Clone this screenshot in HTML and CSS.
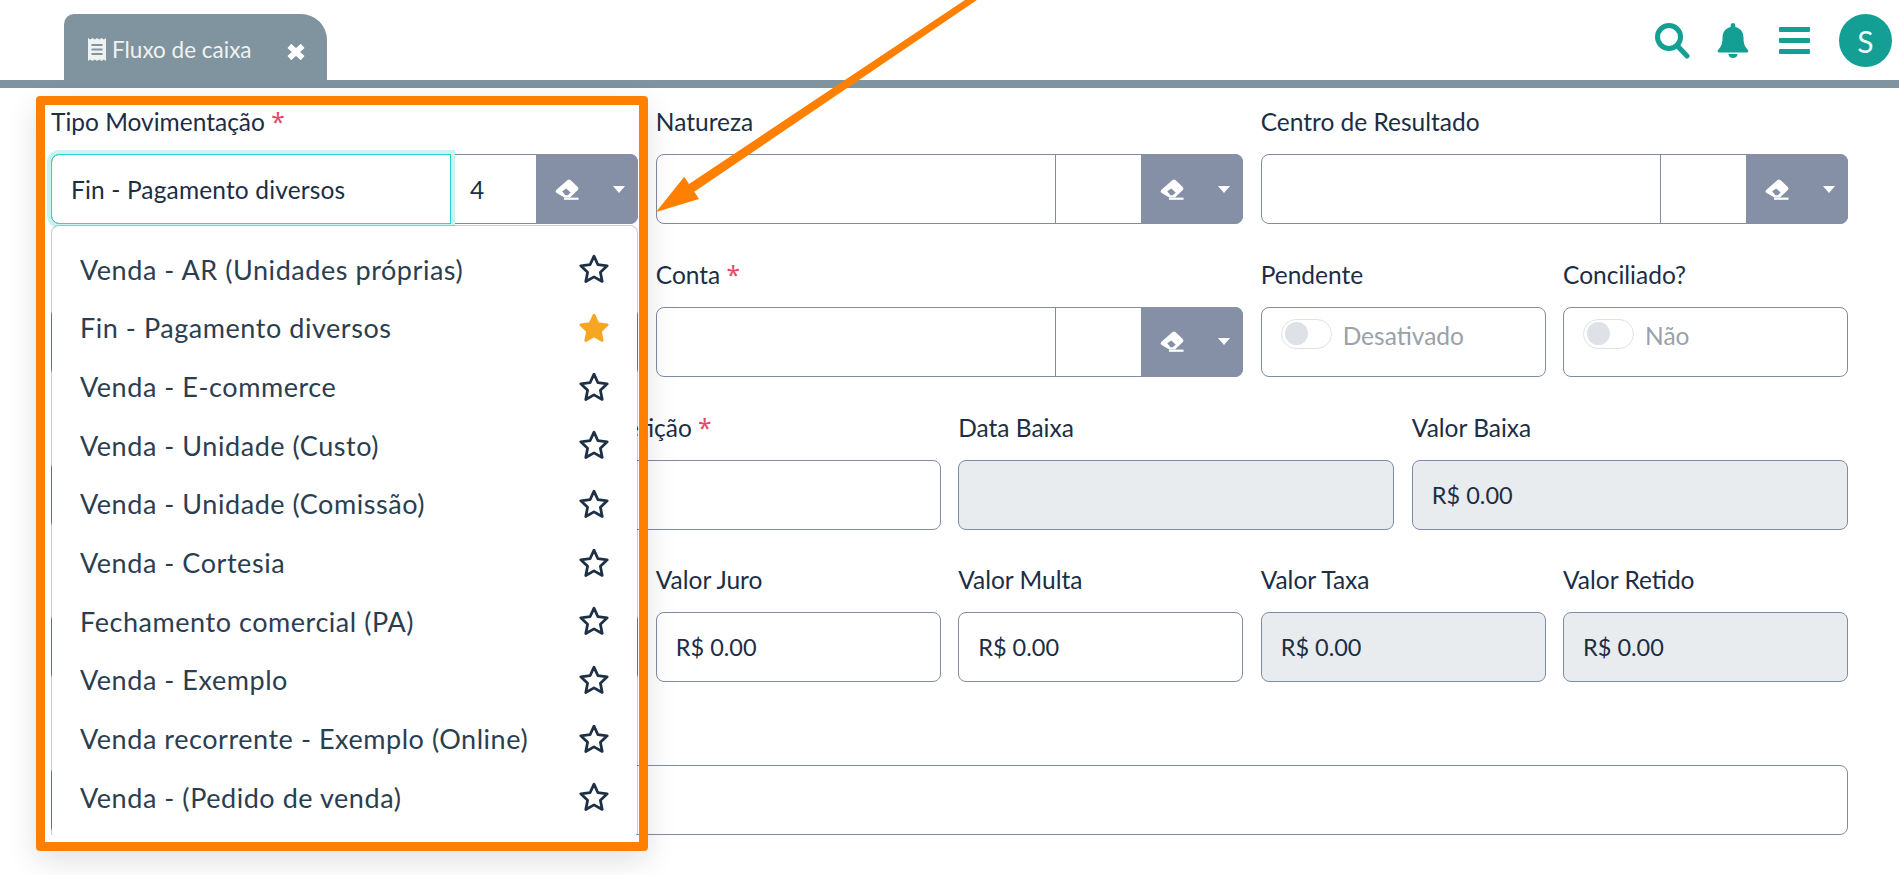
FILE: index.html
```html
<!DOCTYPE html>
<html lang="pt-BR">
<head>
    <meta charset="UTF-8">
    <meta name="viewport" content="width=device-width, initial-scale=1.0">
    <title>Fluxo de caixa</title>
    <link rel="stylesheet" href="styles.css">
</head>
<body>
    <svg width="0" height="0" class="defs">
        <defs>
            <symbol id="eraser" viewBox="0 0 24 21">
                <path fill-rule="evenodd" d="M12.6 1 Q14 0 15.4 1 L22.8 8 Q24 9.5 22.8 11 L15 18.4 H9.4 L1.2 13.8 Q0 12.3 1.2 11 Z M7.2 12.2 L11.2 9.4 L15.6 13.6 L12.8 16.2 H10.4 Z"/>
                <rect x="9" y="18.6" width="14.5" height="2.2"/>
            </symbol>
            <symbol id="star" viewBox="0 0 30 30">
                <path d="M15 3 L18.7 11 L27.4 12 L21 18 L22.7 26.7 L15 22.4 L7.3 26.7 L9 18 L2.6 12 L11.3 11 Z"/>
            </symbol>
        </defs>
    </svg>

    <header class="topbar">
        <div class="tab">
            <svg class="tab-icon" viewBox="0 0 18 23">
                <path fill-rule="evenodd" d="M0 0 L2.2 1.5 L4.5 0 L6.8 1.5 L9 0 L11.2 1.5 L13.5 0 L15.8 1.5 L18 0 V23 L15.8 21.5 L13.5 23 L11.2 21.5 L9 23 L6.8 21.5 L4.5 23 L2.2 21.5 L0 23 Z M3.5 6 V8 H14.5 V6 Z M3.5 10.5 V12.5 H14.5 V10.5 Z M3.5 15 V17 H14.5 V15 Z"/>
            </svg>
            <span class="tab-title">Fluxo de caixa</span>
            <svg class="tab-close" viewBox="0 0 18 16">
                <path d="M3 2.5 L15 13.5 M15 2.5 L3 13.5"/>
            </svg>
        </div>
        <div class="actions">
            <svg class="icon-search" viewBox="0 0 35 36">
                <circle cx="14" cy="14" r="11.5"/>
                <path d="M23 23.5 L32 33"/>
            </svg>
            <svg class="icon-bell" viewBox="0 0 32 35">
                <path d="M16 0 c-1.4 0-2.3 1-2.3 2.3 v1.6 C8.4 5 5.5 9.4 5.5 14.8 c0 7-1.9 9.5-4.4 12.1 -1 1.1-.4 2.6 1 2.6 h27.8 c1.4 0 2-1.5 1-2.6 -2.5-2.6-4.4-5.1-4.4-12.1 0-5.4-2.9-9.8-8.2-10.9 V2.3 C18.3 1 17.4 0 16 0 z"/>
                <path d="M11.5 31 h9 c0 2.4-2 4-4.5 4 s-4.5-1.6-4.5-4 z"/>
            </svg>
            <div class="icon-bars"><span></span><span></span><span></span></div>
            <div class="avatar">S</div>
        </div>
    </header>

    <main class="form">
        <div class="field span-4 field-open">
            <label>Tipo Movimentação <em>*</em></label>
            <div class="lookup focused">
                <div class="lookup-text">Fin - Pagamento diversos</div>
                <div class="lookup-code">4</div>
                <div class="lookup-btn">
                    <svg class="eraser"><use href="#eraser"/></svg>
                    <span class="caret"></span>
                </div>
            </div>
            <ul class="menu">
                <li>Venda - AR (Unidades próprias)<svg class="star"><use href="#star"/></svg></li>
                <li>Fin - Pagamento diversos<svg class="star on"><use href="#star"/></svg></li>
                <li>Venda - E-commerce<svg class="star"><use href="#star"/></svg></li>
                <li>Venda - Unidade (Custo)<svg class="star"><use href="#star"/></svg></li>
                <li>Venda - Unidade (Comissão)<svg class="star"><use href="#star"/></svg></li>
                <li>Venda - Cortesia<svg class="star"><use href="#star"/></svg></li>
                <li>Fechamento comercial (PA)<svg class="star"><use href="#star"/></svg></li>
                <li>Venda - Exemplo<svg class="star"><use href="#star"/></svg></li>
                <li>Venda recorrente - Exemplo (Online)<svg class="star"><use href="#star"/></svg></li>
                <li>Venda - (Pedido de venda)<svg class="star"><use href="#star"/></svg></li>
            </ul>
        </div>
        <div class="field span-4">
            <label>Natureza</label>
            <div class="lookup">
                <div class="lookup-text"></div>
                <div class="lookup-code"></div>
                <div class="lookup-btn">
                    <svg class="eraser"><use href="#eraser"/></svg>
                    <span class="caret"></span>
                </div>
            </div>
        </div>
        <div class="field span-4">
            <label>Centro de Resultado</label>
            <div class="lookup">
                <div class="lookup-text"></div>
                <div class="lookup-code"></div>
                <div class="lookup-btn">
                    <svg class="eraser"><use href="#eraser"/></svg>
                    <span class="caret"></span>
                </div>
            </div>
        </div>

        <!-- fields behind the open menu, only their left border shows -->
        <div class="field span-4">
            <label></label>
            <div class="box"></div>
        </div>
        <div class="field span-4">
            <label>Conta <em>*</em></label>
            <div class="lookup">
                <div class="lookup-text"></div>
                <div class="lookup-code"></div>
                <div class="lookup-btn">
                    <svg class="eraser"><use href="#eraser"/></svg>
                    <span class="caret"></span>
                </div>
            </div>
        </div>
        <div class="field span-2">
            <label>Pendente</label>
            <div class="box switch-box"><span class="switch"></span>Desativado</div>
        </div>
        <div class="field span-2">
            <label>Conciliado?</label>
            <div class="box switch-box"><span class="switch"></span>Não</div>
        </div>

        <div class="field span-3">
            <label></label>
            <div class="box"></div>
        </div>
        <div class="field span-3">
            <label>Data Competição <em>*</em></label>
            <div class="box"></div>
        </div>
        <div class="field span-3">
            <label>Data Baixa</label>
            <div class="box disabled"></div>
        </div>
        <div class="field span-3">
            <label>Valor Baixa</label>
            <div class="box disabled">R$ 0.00</div>
        </div>

        <div class="field span-2">
            <label></label>
            <div class="box"></div>
        </div>
        <div class="field span-2">
            <label></label>
            <div class="box"></div>
        </div>
        <div class="field span-2">
            <label>Valor Juro</label>
            <div class="box">R$ 0.00</div>
        </div>
        <div class="field span-2">
            <label>Valor Multa</label>
            <div class="box">R$ 0.00</div>
        </div>
        <div class="field span-2">
            <label>Valor Taxa</label>
            <div class="box disabled">R$ 0.00</div>
        </div>
        <div class="field span-2">
            <label>Valor Retido</label>
            <div class="box disabled">R$ 0.00</div>
        </div>

        <div class="field span-12">
            <label></label>
            <div class="box"></div>
        </div>
    </main>

    <!-- Orange annotation drawn over the form -->
    <div class="highlight"></div>
    <svg class="arrow" viewBox="0 0 330 220">
        <polygon points="1,212 29.3,176.7 34,184 310,0 322,0 39.3,191.7 44,199"/>
    </svg>
</body>
</html>
```
FILE: styles.css
```css
body {
    font-family: Lato, sans-serif;
    font-size: 24.5px;
    color: #1c2e45;
    margin: 0;
    padding: 0;
    background-color: #fff;
}
.defs {
    position: absolute;
}

/* top bar */
.topbar {
    height: 80px;
    border-bottom: 8px solid #7f949e;
    display: flex;
    align-items: flex-end;
    justify-content: space-between;
    padding: 0 7px 0 64px;
}
.tab {
    width: 263px;
    height: 66px;
    box-sizing: border-box;
    background-color: #7f949e;
    border-radius: 10px 26px 0 0;
    color: #eef2f2;
    display: flex;
    align-items: center;
    padding: 4px 21px 0 24px;
}
.tab-icon {
    width: 18px;
    height: 23px;
    fill: #eef2f2;
    margin-right: 6px;
}
.tab-title {
    font-size: 22.5px;
    flex: 1;
}
.tab-close {
    width: 20px;
    height: 18px;
    margin-top: 6px;
    fill: none;
    stroke: #fff;
    stroke-width: 5;
}
.actions {
    align-self: flex-start;
    display: flex;
    align-items: center;
    padding-top: 14px;
}
.icon-search {
    width: 35px;
    height: 36px;
    fill: none;
    stroke: #139f94;
    stroke-width: 5;
    stroke-linecap: round;
    margin-right: 27px;
}
.icon-bell {
    width: 32px;
    height: 35px;
    fill: #139f94;
    margin-right: 30px;
}
.icon-bars {
    width: 31px;
    display: flex;
    flex-direction: column;
    gap: 6px;
    margin-right: 29px;
}
.icon-bars span {
    height: 5px;
    border-radius: 1px;
    background-color: #139f94;
}
.avatar {
    width: 53px;
    height: 53px;
    border-radius: 50%;
    background-color: #139f94;
    color: #eafafa;
    font-size: 30px;
    display: flex;
    align-items: center;
    justify-content: center;
}

/* form */
.form {
    display: grid;
    grid-template-columns: repeat(12, 1fr);
    column-gap: 17.5px;
    row-gap: 35.75px;
    padding: 19px 51px 0;
}
.span-2 { grid-column: span 2; }
.span-3 { grid-column: span 3; }
.span-4 { grid-column: span 4; }
.span-12 { grid-column: span 12; }
.field {
    position: relative;
}
.field label {
    display: block;
    height: 30px;
    line-height: 30px;
    margin-bottom: 17px;
}
.field em {
    color: #e5476a;
    font-family: "Noto Sans", sans-serif;
    font-style: normal;
}
.box {
    height: 70px;
    box-sizing: border-box;
    border: 1px solid #7f8ca5;
    border-radius: 8px;
    padding: 0 19px;
    font-size: 23.5px;
    display: flex;
    align-items: center;
}
.disabled {
    background-color: #e9ecef;
}
.switch-box {
    color: #9aa1a9;
    font-size: 24.5px;
    align-items: flex-start;
    line-height: 56px;
}
.switch {
    width: 51px;
    height: 30px;
    box-sizing: border-box;
    border: 1px solid #dee2e6;
    border-radius: 15px;
    margin: 11px 11px 0 0;
    padding: 2px 3px;
}
.switch::before {
    content: "";
    display: block;
    width: 23px;
    height: 23px;
    border-radius: 50%;
    background-color: #dee2e6;
}

/* lookup: text + code + buttons */
.lookup {
    height: 70px;
    box-sizing: border-box;
    display: flex;
    border: 1px solid #7f8ca5;
    border-radius: 8px;
}
.lookup-text {
    width: 399px;
    box-sizing: border-box;
    padding: 0 19px;
    line-height: 70px;
    letter-spacing: .15px;
    border-right: 1px solid #7f8ca5;
}
.lookup-code {
    flex: 1;
    padding: 0 19px;
    line-height: 70px;
}
.lookup-btn {
    width: 102px;
    margin: -1px -1px -1px 0;
    border-radius: 0 8px 8px 0;
    background-color: #8590a6;
    display: flex;
    align-items: center;
    justify-content: space-between;
    padding: 0 10px 0 19px;
    box-sizing: border-box;
}
.focused {
    position: relative;
}
.focused .lookup-text {
    margin: -1px 0 -1px -1px;
    width: 400px;
    height: 70px;
    border: 1px solid #2dd4c8;
    border-radius: 8px 0 0 8px;
    box-shadow: 0 0 0 4px #c8f5f1;
}
.eraser {
    width: 24px;
    height: 21px;
    fill: #fff;
}
.caret {
    width: 0;
    height: 0;
    border-left: 6px solid transparent;
    border-right: 6px solid transparent;
    border-top: 7px solid #fff;
    margin-right: 3px;
}

/* dropdown */
.menu {
    position: absolute;
    z-index: 5;
    top: 118px;
    left: 0;
    right: 0;
    margin: 0;
    padding: 14px 0 12px;
    list-style-type: none;
    background-color: #fff;
    background-clip: padding-box;
    border: 1px solid rgba(0, 0, 0, .2);
    border-radius: 8px;
    color: #2b3e50;
    font-size: 27px;
    letter-spacing: .55px;
}
.menu li {
    height: 58.67px;
    display: flex;
    align-items: center;
    justify-content: space-between;
    padding: 0 27px 0 28px;
}
.star {
    width: 32px;
    height: 32px;
    fill: none;
    stroke: #1e3044;
    stroke-width: 2.6;
    stroke-linejoin: round;
}
.star.on {
    fill: #f5a623;
    stroke: #f5a623;
}

/* annotation */
.highlight {
    position: absolute;
    z-index: 10;
    top: 96px;
    left: 36px;
    width: 612px;
    height: 755px;
    box-sizing: border-box;
    border: 9px solid #ff8000;
    border-radius: 4px;
    box-shadow: 0 10px 30px rgba(0, 0, 0, .12);
}
.arrow {
    position: absolute;
    z-index: 10;
    top: 0;
    left: 655px;
    width: 330px;
    height: 220px;
    fill: #ff8000;
}
```
